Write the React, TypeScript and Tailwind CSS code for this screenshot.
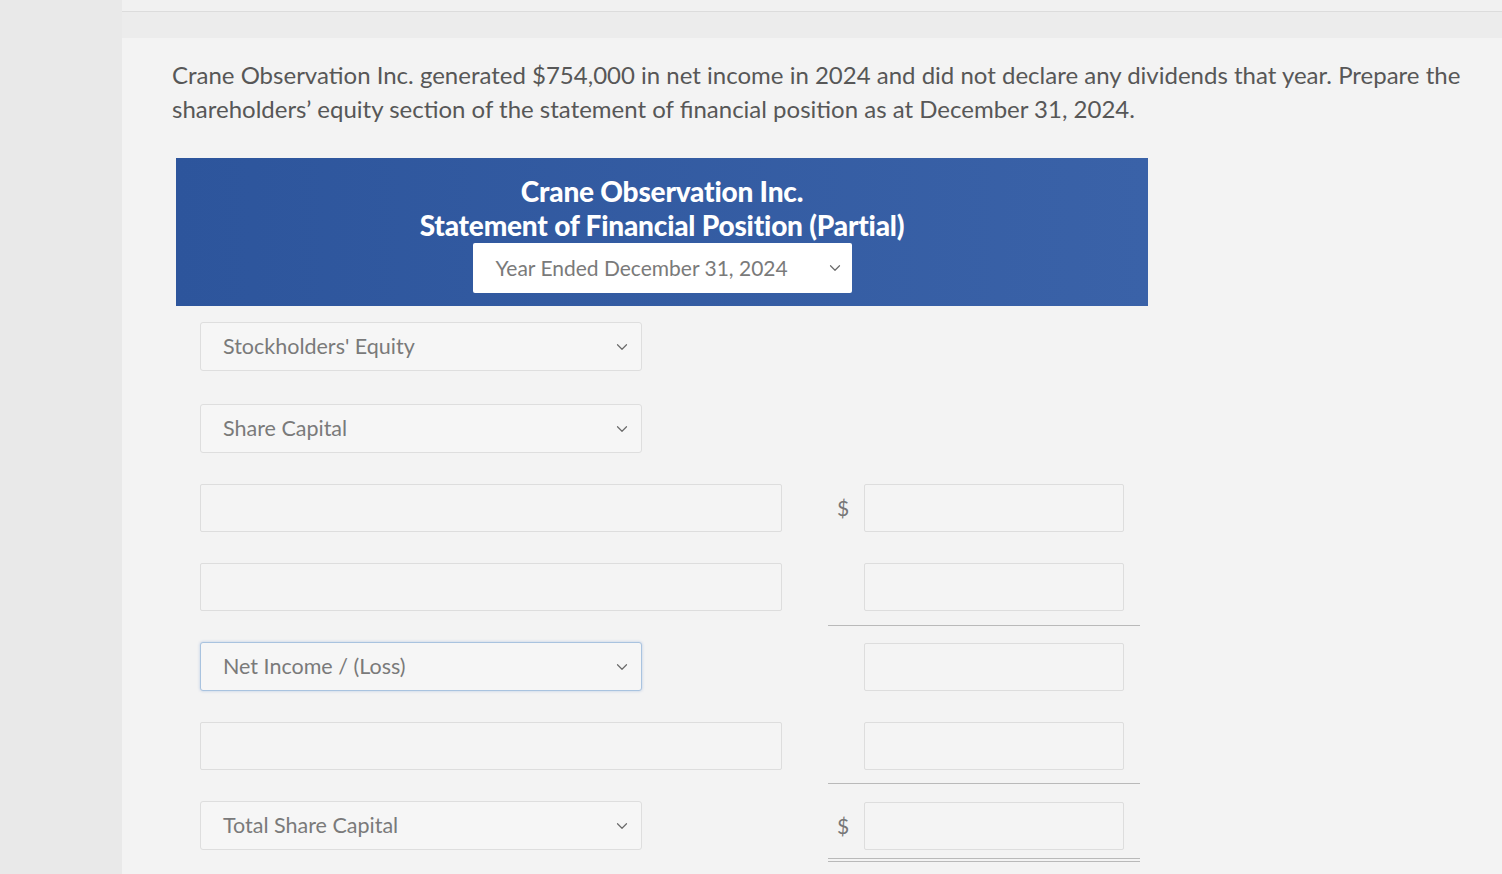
import React from 'react';
import { ChevronDown } from 'lucide-react';

const font = { fontFamily: 'Lato, "Open Sans", sans-serif' };

const Select: React.FC<{ label: string; focused?: boolean }> = ({ label, focused }) => (
  <div
    className={`flex h-[49px] w-[442px] items-center justify-between rounded-[3px] border bg-[#f6f6f6] pl-[22px] pr-[10px] ${
      focused ? 'border-[#a9c3df] shadow-[0_0_3px_rgba(110,150,210,0.45)]' : 'border-[#dedede]'
    }`}
  >
    <span className="text-[21.5px] text-[#7a7a7a]">{label}</span>
    <ChevronDown size={18} strokeWidth={1.6} className="text-[#6b6b6b]" />
  </div>
);

const TextBox: React.FC<{ w: string }> = ({ w }) => (
  <div className={`h-[48px] ${w} rounded-[2px] border border-[#dddddd] bg-[#f4f4f4]`}></div>
);

const Amount: React.FC<{ dollar?: boolean }> = ({ dollar }) => (
  <div className="flex items-center">
    <div className="flex w-[82px] justify-center pl-[40px] text-[21px] text-[#777]">{dollar ? '$' : ''}</div>
    <TextBox w="w-[260px]" />
  </div>
);

const App: React.FC = () => {
  return (
    <div className="flex min-h-[874px] w-[1502px] overflow-hidden bg-[#ebebeb]" style={font}>
      <div className="w-[122px] shrink-0 bg-[#e9e9e9]"></div>
      <div className="flex-1 bg-[#f3f3f3]">
        <div className="h-[12px] border-b border-[#dcdcdc] bg-[#f1f1f1]"></div>
        <div className="h-[26px] bg-[#ececec]"></div>

        <div className="pl-[50px] pr-[20px] pt-[20px]">
          <p className="text-[24px] leading-[34px] text-[#575757]">
            Crane Observation Inc. generated $754,000 in net income in 2024 and did not declare any dividends that year. Prepare the
            <br />
            shareholders’ equity section of the statement of financial position as at December 31, 2024.
          </p>

          <div className="ml-[4px] mt-[32px] flex w-[972px] flex-col items-center bg-gradient-to-r from-[#2d559c] to-[#3a62a8] pb-[13px] pt-[16px] text-white">
            <div className="text-[28px] font-black leading-[34px] tracking-[-0.2px]">Crane Observation Inc.</div>
            <div className="text-[28px] font-black leading-[34px] tracking-[-0.2px]">Statement of Financial Position (Partial)</div>
            <div className="mt-[1px] flex h-[50px] w-[379px] items-center justify-between rounded-[2px] bg-white pl-[23px] pr-[8px]">
              <span className="text-[21px] text-[#7a7a7a]">Year Ended December 31, 2024</span>
              <ChevronDown size={18} strokeWidth={1.6} className="text-[#6b6b6b]" />
            </div>
          </div>

          <div className="ml-[28px] mt-[16px] flex flex-col">
            <Select label="Stockholders' Equity" />
            <div className="h-[33px]"></div>
            <Select label="Share Capital" />
            <div className="h-[31px]"></div>

            <div className="flex items-center">
              <TextBox w="w-[582px]" />
              <Amount dollar />
            </div>
            <div className="h-[31px]"></div>

            <div className="flex items-center">
              <TextBox w="w-[582px]" />
              <Amount />
            </div>
            <div className="h-[31px]">
              <div className="ml-[628px] mt-[14px] h-px w-[312px] bg-[#b9b9b9]"></div>
            </div>

            <div className="flex items-center">
              <Select label="Net Income / (Loss)" focused />
              <div className="w-[140px]"></div>
              <Amount />
            </div>
            <div className="h-[31px]"></div>

            <div className="flex items-center">
              <TextBox w="w-[582px]" />
              <Amount />
            </div>
            <div className="h-[31px]">
              <div className="ml-[628px] mt-[13px] h-px w-[312px] bg-[#b9b9b9]"></div>
            </div>

            <div className="flex items-center">
              <Select label="Total Share Capital" />
              <div className="w-[140px]"></div>
              <Amount dollar />
            </div>
            <div className="ml-[628px] mt-[8px] w-[312px] border-y border-[#b9b9b9] py-[1px]"></div>
          </div>
        </div>
      </div>
    </div>
  );
};

export default App;
